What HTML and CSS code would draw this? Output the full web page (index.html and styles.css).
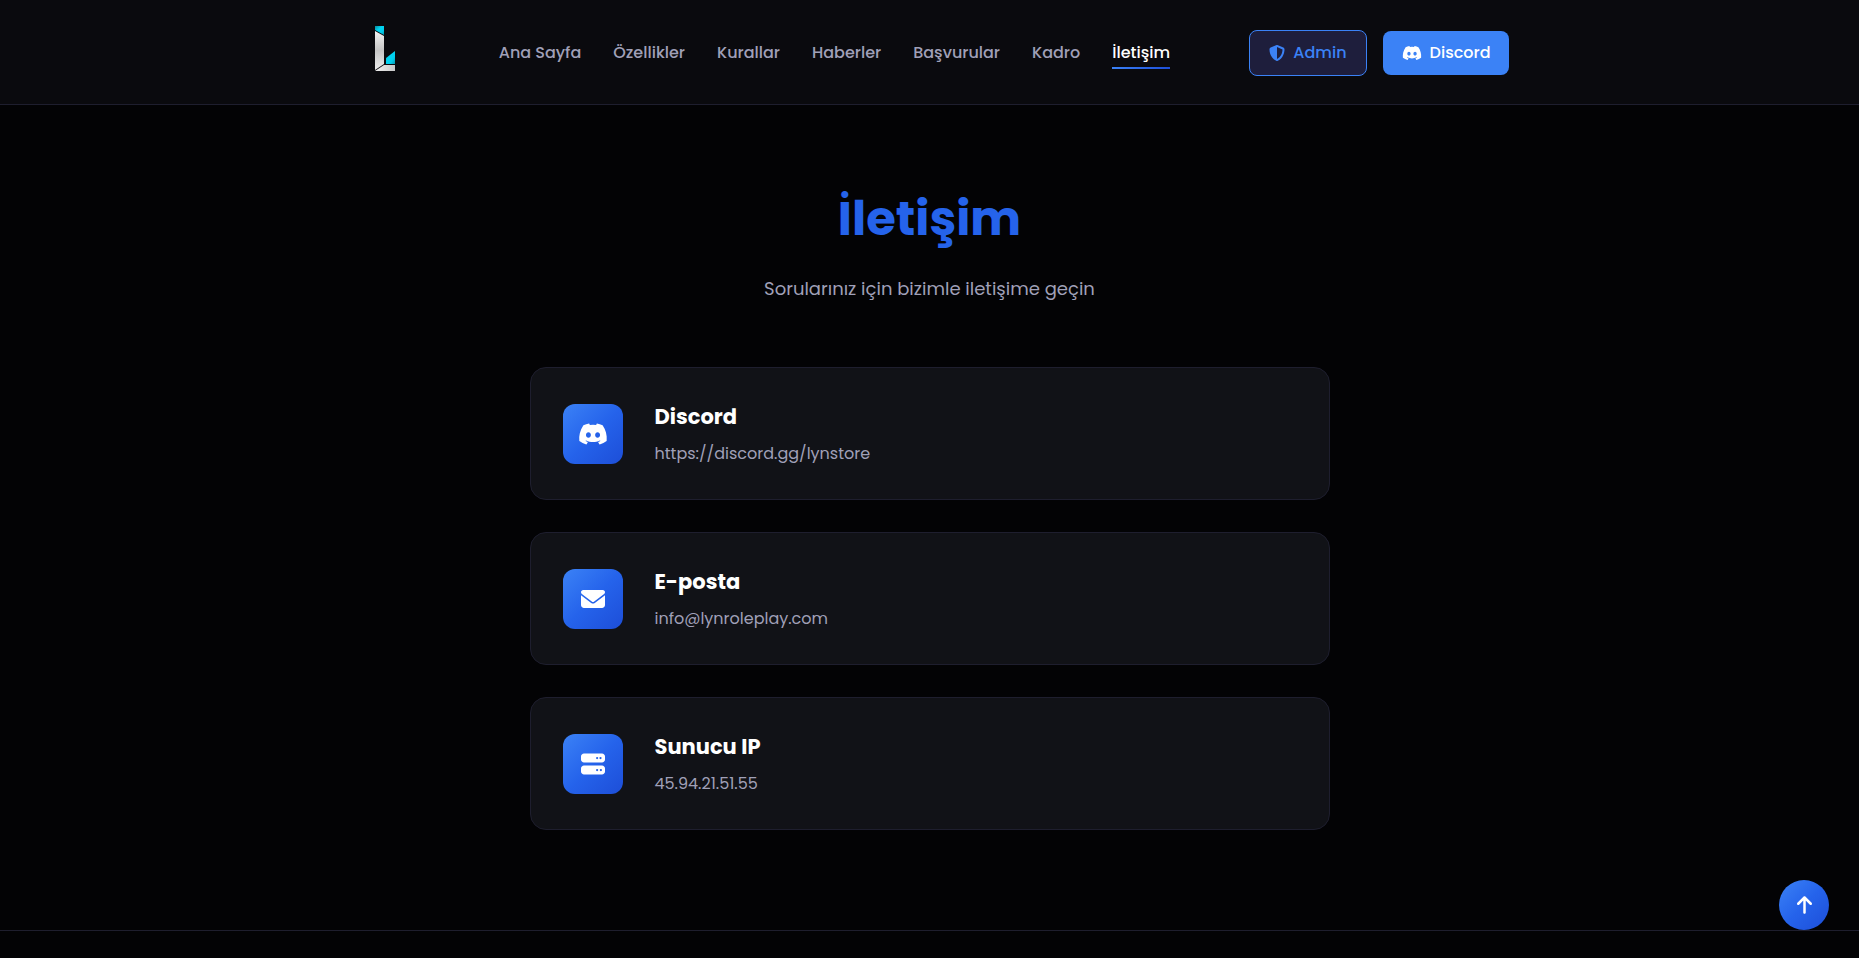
FILE: index.html
```
<!DOCTYPE html>
<html lang="tr">
<head>
<meta charset="utf-8">
<meta name="viewport" content="width=device-width, initial-scale=1">
<title>İletişim</title>
<link rel="stylesheet" href="styles.css">
</head>
<body>
<svg class="sprite" aria-hidden="true">
  <symbol id="discord" viewBox="0 0 640 512"><path d="M524.5 69.8a1.500 1.500 0 0 0-.8-.7A485.100 485.100 0 0 0 404.100 32a1.800 1.800 0 0 0-1.900.9 337.500 337.500 0 0 0-14.900 30.600 447.800 447.800 0 0 0-134.400 0 309.500 309.500 0 0 0-15.100-30.600 1.900 1.900 0 0 0-1.900-.9A483.700 483.700 0 0 0 116.100 69.100a1.700 1.700 0 0 0-.8.700C39.100 183.700 18.200 294.700 28.400 404.400a2 2 0 0 0 .8 1.400A487.700 487.700 0 0 0 176 479.900a1.900 1.900 0 0 0 2.100-.7A348.200 348.200 0 0 0 208.100 430.400a1.900 1.900 0 0 0-1-2.600 321.200 321.200 0 0 1-45.900-21.900 1.900 1.900 0 0 1-.2-3.100c3.100-2.300 6.200-4.700 9.100-7.100a1.800 1.800 0 0 1 1.900-.3c96.200 43.900 200.400 43.900 295.500 0a1.800 1.800 0 0 1 1.900.2c2.900 2.400 6 4.900 9.100 7.200a1.900 1.900 0 0 1-.2 3.100 301.400 301.400 0 0 1-45.900 21.800 1.900 1.900 0 0 0-1 2.600 391.100 391.100 0 0 0 30 48.800 1.900 1.900 0 0 0 2.100.7A486 486 0 0 0 610.700 405.700a1.900 1.900 0 0 0 .8-1.400C623.700 277.600 590.900 167.500 524.500 69.800ZM222.500 337.600c-29 0-52.800-26.600-52.800-59.200s23.400-59.200 52.800-59.200c29.700 0 53.300 26.800 52.800 59.200 0 32.600-23.400 59.200-52.800 59.200Zm195.400 0c-29 0-52.800-26.600-52.800-59.200s23.400-59.200 52.800-59.200c29.700 0 53.300 26.800 52.800 59.200 0 32.600-23.200 59.200-52.800 59.200Z"/></symbol>
  <symbol id="shield" viewBox="0 0 512 512"><path d="M256 0c4.600 0 9.200 1 13.400 2.900l188.300 79.900c22 9.300 38.400 31 38.300 57.200-.5 99.200-41.300 280.700-213.600 363.200-16.700 8-36.100 8-52.800 0C57.300 420.700 16.500 239.200 16 140c-.1-26.200 16.300-47.900 38.300-57.200L242.700 2.900C246.800 1 251.400 0 256 0Zm0 66.800v378.100C394 378 431.100 230.100 432 141.400L256 66.800Z"/></symbol>
  <symbol id="mail" viewBox="0 0 512 512"><path d="M48 64C21.500 64 0 85.500 0 112c0 15.100 7.100 29.300 19.200 38.400l217.600 163.200c11.400 8.500 27 8.500 38.400 0l217.600-163.200c12.100-9.100 19.200-23.300 19.200-38.400 0-26.500-21.500-48-48-48H48ZM0 176v208c0 35.300 28.700 64 64 64h384c35.300 0 64-28.700 64-64V176L294.400 339.200c-22.800 17.100-54 17.100-76.800 0L0 176Z"/></symbol>
  <symbol id="server" viewBox="0 0 512 512"><path fill-rule="evenodd" d="M64 32C28.700 32 0 60.700 0 96v64c0 35.300 28.700 64 64 64h384c35.300 0 64-28.700 64-64V96c0-35.300-28.700-64-64-64H64Zm280 72a24 24 0 1 1 0 48 24 24 0 1 1 0-48Zm48 24a24 24 0 1 1 48 0 24 24 0 1 1-48 0ZM64 288c-35.300 0-64 28.700-64 64v64c0 35.300 28.700 64 64 64h384c35.300 0 64-28.700 64-64v-64c0-35.300-28.700-64-64-64H64Zm280 72a24 24 0 1 1 0 48 24 24 0 1 1 0-48Zm56 24a24 24 0 1 1 48 0 24 24 0 1 1-48 0Z"/></symbol>
  <symbol id="arrow" viewBox="0 0 384 512"><path d="M214.600 41.400c-12.500-12.500-32.800-12.500-45.300 0l-160 160c-12.500 12.500-12.500 32.800 0 45.300s32.800 12.500 45.300 0L160 141.200V448c0 17.700 14.300 32 32 32s32-14.300 32-32V141.200l105.400 105.400c12.500 12.500 32.800 12.500 45.300 0s12.500-32.800 0-45.300l-160-160Z"/></symbol>
</svg>

<header class="header">
  <div class="container header-inner">
    <a class="logo" href="#" aria-label="Ana sayfaya dön">
      <svg viewBox="0 1 70 70" aria-hidden="true">
        <defs>
          <linearGradient id="steel" x1="0" y1="0" x2="0" y2="1"><stop offset="0" stop-color="#f4f4f4"/><stop offset=".5" stop-color="#c4c4c4"/><stop offset="1" stop-color="#ececec"/></linearGradient>
          <linearGradient id="foot" x1="0" y1="0" x2="1" y2="0"><stop offset="0" stop-color="#f0f0f0"/><stop offset="1" stop-color="#c8c8c8"/></linearGradient>
          <linearGradient id="cyan" x1="0" y1="0" x2="1" y2="1"><stop offset="0" stop-color="#078a9c"/><stop offset=".4" stop-color="#00d4f2"/><stop offset=".7" stop-color="#00cdec"/><stop offset="1" stop-color="#0797ad"/></linearGradient>
        </defs>
        <path fill="url(#cyan)" d="M25 9h9v9l-9-5Z"/>
        <path fill="url(#cyan)" d="M36 47v-6l9-7v13Z"/>
        <path fill="url(#steel)" d="M25 14l9 5v28l-9 6Z"/>
        <path fill="url(#foot)" d="M25 54l9-6h11v6Z"/>
      </svg>
    </a>
    <nav class="nav">
      <a href="#">Ana Sayfa</a>
      <a href="#">Özellikler</a>
      <a href="#">Kurallar</a>
      <a href="#">Haberler</a>
      <a href="#">Başvurular</a>
      <a href="#">Kadro</a>
      <a class="active" href="#" aria-current="page">İletişim</a>
    </nav>
    <div class="actions">
      <a class="btn btn-outline" href="#"><svg class="icon-shield" aria-hidden="true"><use href="#shield"/></svg>Admin</a>
      <a class="btn btn-primary" href="#"><svg class="icon-discord" aria-hidden="true"><use href="#discord"/></svg>Discord</a>
    </div>
  </div>
</header>

<main class="contact">
  <h1>İletişim</h1>
  <p class="lead">Sorularınız için bizimle iletişime geçin</p>
  <div class="cards">
    <section class="card">
      <div class="tile"><svg class="wide" aria-hidden="true"><use href="#discord"/></svg></div>
      <div><h2>Discord</h2><p>https://discord.gg/lynstore</p></div>
    </section>
    <section class="card">
      <div class="tile"><svg aria-hidden="true"><use href="#mail"/></svg></div>
      <div><h2>E-posta</h2><p>info@lynroleplay.com</p></div>
    </section>
    <section class="card">
      <div class="tile"><svg aria-hidden="true"><use href="#server"/></svg></div>
      <div><h2>Sunucu IP</h2><p>45.94.21.51.55</p></div>
    </section>
  </div>
</main>

<footer class="footer"></footer>

<button class="to-top" type="button" aria-label="Yukarı çık"><svg aria-hidden="true"><use href="#arrow"/></svg></button>
</body>
</html>
```
FILE: styles.css
```
:root {
  --bg: #030305;
  --panel: #0a0a0e;
  --card: #111217;
  --line: #1e1e2e;
  --muted: #a0a0b8;
  --blue: #3b82f6;
  --gradient: linear-gradient(135deg, #3b82f6 0%, #2563eb 50%, #1d4ed8 100%);
}

* { box-sizing: border-box; margin: 0; padding: 0; }

body {
  display: flex;
  flex-direction: column;
  min-height: 100vh;
  background: var(--bg);
  color: #fff;
  font-family: Poppins, Inter, "Open Sans", sans-serif;
  font-size: 16px;
  line-height: 26px;
}

a { color: inherit; text-decoration: none; }
svg { display: block; fill: currentColor; }
.sprite { position: absolute; width: 0; height: 0; }

.header {
  background: var(--panel);
  border-bottom: 1px solid var(--line);
}

.container {
  width: 100%;
  max-width: 1200px;
  margin: 0 auto;
  padding: 0 20px;
}

.header-inner {
  display: flex;
  align-items: center;
  justify-content: space-between;
  padding-top: 18px;
  padding-bottom: 16px;
}

.logo svg { width: 70px; height: 70px; }

.nav {
  display: flex;
  gap: 32px;
  color: var(--muted);
  font-weight: 500;
}

.nav a { border-bottom: 2px solid transparent; padding: 2px 0 0; }

.nav .active {
  color: #fff;
  border-image: linear-gradient(90deg, #3b82f6, #1d4ed8) 1;
}

.nav a { padding: 3px 0 1px; }

.actions { display: flex; align-items: center; gap: 16px; }

.btn {
  display: inline-flex;
  align-items: center;
  gap: 8px;
  padding: 9px 19px;
  border-radius: 8px;
  font-weight: 500;
}

.btn-outline { border: 1px solid var(--blue); background: #1e1e3c; color: var(--blue); }
.btn-primary { background: var(--blue); }
.icon-shield { width: 16px; height: 16px; }
.icon-discord { width: 20px; height: 16px; }

.contact {
  width: 100%;
  max-width: 840px;
  margin: 0 auto;
  padding: 73px 20px 100px;
  text-align: center;
}

h1 { color: #2563eb; font-size: 48px; line-height: 82px; font-weight: 700; }
.lead { margin-top: 15px; color: var(--muted); font-size: 18px; line-height: 28px; }

.cards {
  display: grid;
  gap: 32px;
  margin-top: 64px;
  text-align: left;
}

.card {
  display: flex;
  align-items: center;
  gap: 32px;
  padding: 32px;
  border: 1px solid var(--line);
  border-radius: 16px;
  background: var(--card);
}

.card h2 { font-size: 21px; line-height: 33px; font-weight: 700; }
.card p { margin-top: 8px; color: var(--muted); }

.tile {
  display: grid;
  place-items: center;
  width: 60px;
  height: 60px;
  border-radius: 12px;
  background: var(--gradient);
}

.tile svg { width: 24px; height: 24px; }
.tile .wide { width: 30px; }

.footer { flex: 1; border-top: 1px solid var(--line); }

.to-top {
  position: fixed;
  right: 30px;
  bottom: 28px;
  display: grid;
  place-items: center;
  width: 50px;
  height: 50px;
  border: 0;
  border-radius: 50%;
  background: var(--gradient);
  color: #fff;
}

.to-top svg { width: 15px; height: 20px; }
```
